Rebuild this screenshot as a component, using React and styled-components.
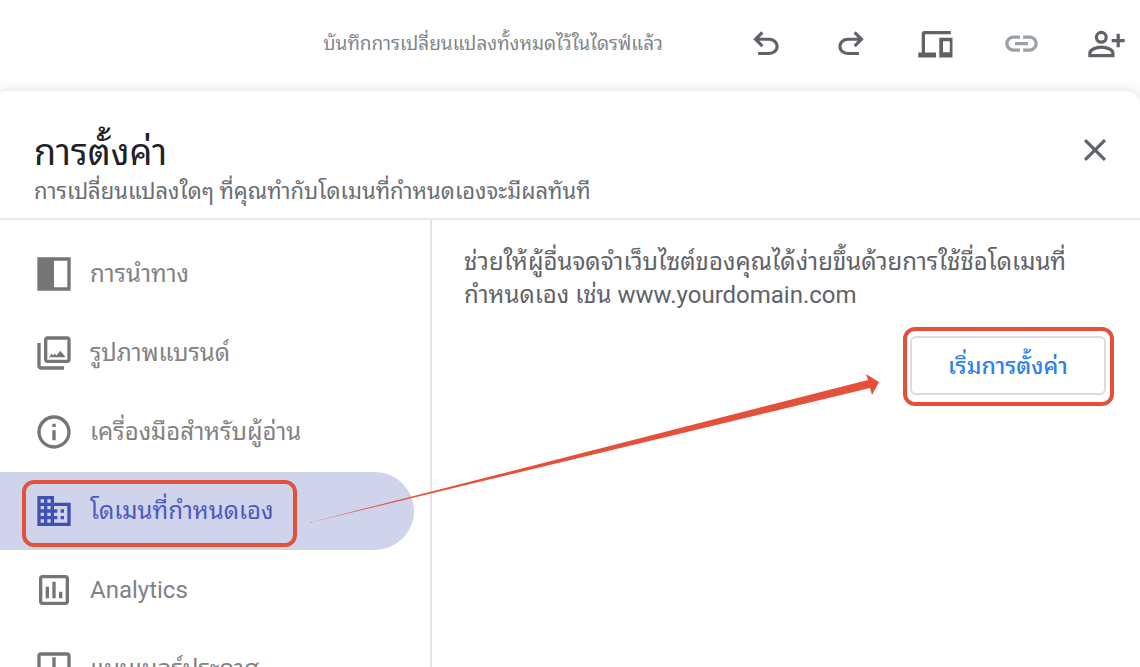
import React from "react";
import styled, { createGlobalStyle } from "styled-components";

const GlobalStyle = createGlobalStyle`
  * {
    box-sizing: border-box;
  }
  body {
    margin: 0;
    background-color: #ffffff;
    font-family: Roboto, "Droid Sans Thai", "Noto Sans Thai Looped", Loma, Waree, Garuda, Umpush, "Noto Sans Thai", "Noto Sans", sans-serif;
  }
  button {
    font-family: inherit;
    border: none;
    background: none;
    padding: 0;
    cursor: pointer;
  }
`;
const Page = styled.div`
  display: flex;
  flex-direction: column;
  height: 100vh;
  overflow: hidden;
`;
const Toolbar = styled.header`
  display: flex;
  flex-shrink: 0;
  align-items: center;
  justify-content: flex-end;
  height: 91px;
  padding: 0 14px 4px 0;
`;
const SaveStatus = styled.span`
  margin-right: 83px;
  font-size: 19px;
  line-height: 32px;
  color: #80868b;
`;
const ToolbarActions = styled.div`
  display: flex;
  gap: 45px;
`;
const IconButton = styled.button`
  display: flex;
  align-items: center;
  justify-content: center;
  width: 40px;
  height: 40px;
  color: ${(props) => (props.disabled ? "#9aa0a6" : "#5f6368")};
`;
const Panel = styled.section`
  display: flex;
  flex: 1;
  flex-direction: column;
  min-height: 0;
  border-radius: 4px 14px 0 0;
  background-color: #ffffff;
  box-shadow: 0 0 12px rgba(60, 64, 67, 0.2);
`;
const PanelHeader = styled.div`
  display: flex;
  flex-shrink: 0;
  align-items: flex-start;
  justify-content: space-between;
  height: 129px;
  padding: 39px 25px 0 34px;
  border-bottom: 2px solid #e8e8e8;
`;
const Title = styled.h1`
  margin: 0;
  font-size: 36px;
  font-weight: 400;
  line-height: 46px;
  color: #202124;
`;
const Subtitle = styled.p`
  margin: 0;
  font-size: 22px;
  line-height: 32px;
  color: #6a6e73;
`;
const PanelBody = styled.div`
  position: relative;
  display: flex;
  flex: 1;
  min-height: 0;
`;
const Sidebar = styled.nav`
  display: flex;
  flex-direction: column;
  flex-shrink: 0;
  gap: 1px;
  width: 432px;
  padding: 15px 16px 0 0;
  border-right: 2px solid #e4e4e4;
`;
const NavItem = styled.button`
  position: relative;
  display: flex;
  flex-shrink: 0;
  align-items: center;
  gap: 16px;
  height: 78px;
  padding-left: 34px;
  border-radius: 0 39px 39px 0;
  font-size: 24px;
  line-height: 32px;
  background-color: ${(props) => (props.$active ? "#d0d3ec" : "transparent")};
  color: ${(props) => (props.$active ? "#4a5bbd" : "#828282")};
  > svg {
    color: ${(props) => (props.$active ? "#3f51b5" : "#757575")};
  }
`;
const Content = styled.main`
  display: flex;
  flex: 1;
  flex-direction: column;
  align-items: flex-start;
  padding: 26px 34px 0 32px;
`;
const Description = styled.p`
  margin: 0;
  font-size: 24px;
  line-height: 33px;
  color: #5f6368;
`;
const SetupButton = styled.button`
  position: relative;
  align-self: flex-end;
  width: 196px;
  height: 59px;
  margin-top: 24px;
  padding-bottom: 4px;
  border: 2px solid #dadce0;
  border-radius: 6px;
  font-size: 23px;
  font-weight: 500;
  color: #2f80ed;
`;
const Highlight = styled.span`
  position: absolute;
  border: 4px solid #e5503a;
  border-radius: 12px;
  pointer-events: none;
`;
const NavHighlight = styled(Highlight)`
  top: 8px;
  left: 22px;
  width: 275px;
  height: 67px;
`;
const ButtonHighlight = styled(Highlight)`
  inset: -11px -10px -13px -9px;
`;
const Arrow = styled.svg`
  position: absolute;
  top: 150px;
  left: 308px;
  pointer-events: none;
`;

const icon = (size, children) => (
  <svg width={size} height={size} viewBox="0 0 24 24" fill="currentColor" aria-hidden="true">
    {children}
  </svg>
);

const UndoIcon = () =>
  icon(
    38,
    <path d="M7 19v-2h7.1q1.575 0 2.738-1T18 13.5 16.838 11 14.1 10H7.8l2.6 2.6L9 14 4 9l5-5 1.4 1.4L7.8 8h6.3q2.425 0 4.163 1.575T20 13.5t-1.737 3.925T14.1 19z" />
  );
const RedoIcon = () =>
  icon(
    38,
    <path
      transform="translate(24 0) scale(-1 1)"
      d="M7 19v-2h7.1q1.575 0 2.738-1T18 13.5 16.838 11 14.1 10H7.8l2.6 2.6L9 14 4 9l5-5 1.4 1.4L7.8 8h6.3q2.425 0 4.163 1.575T20 13.5t-1.737 3.925T14.1 19z"
    />
  );
const DevicesIcon = () => (
  <svg width="40" height="40" viewBox="0 0 40 40" fill="currentColor" aria-hidden="true">
    <path d="M2.3 28.500H5.700V9.500Q5.700 7 8.200 7H34.800V10.200H9V28.500H20V33.500H2.300z" />
    <path fillRule="evenodd" d="M23.300 13.700H36.500V33.500H23.300zM27 17.300V28.200H33.800V17.300z" />
  </svg>
);
const LinkIcon = () =>
  icon(
    39,
    <path d="M17 7h-4v2h4c1.650 0 3 1.350 3 3s-1.350 3-3 3h-4v2h4c2.760 0 5-2.240 5-5s-2.240-5-5-5zm-6 8H7c-1.650 0-3-1.350-3-3s1.350-3 3-3h4V7H7c-2.760 0-5 2.240-5 5s2.240 5 5 5h4v-2zm-3-4h8v2H8z" />
  );
const PersonAddIcon = () => (
  <svg width="40" height="40" viewBox="0 0 40 40" fill="none" stroke="currentColor" strokeWidth="3.2" aria-hidden="true">
    <circle cx="15.3" cy="13.3" r="4.9" />
    <path d="M3.900 31.600v-2.500c0-3.500 6.500-6 11.500-6s11.500 2.500 11.500 6V31.600z" />
    <path d="M25.700 16.600h13M32.200 9.800v13.500" />
  </svg>
);
const CloseIcon = () =>
  icon(
    38,
    <path d="M19 6.410 17.590 5 12 10.590 6.410 5 5 6.410 10.590 12 5 17.590 6.410 19 12 13.410 17.590 19 19 17.590 13.410 12z" />
  );

const NavigationIcon = () => icon(40, <path fillRule="evenodd" d="M2 2h20v20H2zM12 4v16h8V4z" />);
const BrandIcon = () =>
  icon(
    40,
    <path d="M20 4v12H8V4h12m0-2H8c-1.100 0-2 .900-2 2v12c0 1.100.900 2 2 2h12c1.100 0 2-.900 2-2V4c0-1.100-.900-2-2-2zm-8.500 11.500-.800-1.200L9 14.500h10l-3.200-3.800-2.300 2.800-1-1.200zM2 6v14c0 1.100.900 2 2 2h14v-2H4V6H2z" />
  );
const InfoIcon = () =>
  icon(
    40,
    <path d="M11 7h2v2h-2zm0 4h2v6h-2zm1-9C6.480 2 2 6.480 2 12s4.480 10 10 10 10-4.480 10-10S17.520 2 12 2zm0 18c-4.410 0-8-3.590-8-8s3.590-8 8-8 8 3.590 8 8-3.590 8-8 8z" />
  );
const DomainIcon = () =>
  icon(
    40,
    <path d="M12 7V3H2v18h20V7H12zM6 19H4v-2h2v2zm0-4H4v-2h2v2zm0-4H4V9h2v2zm0-4H4V5h2v2zm4 12H8v-2h2v2zm0-4H8v-2h2v2zm0-4H8V9h2v2zm0-4H8V5h2v2zm10 12h-8v-2h2v-2h-2v-2h2v-2h-2V9h8v10zm-2-8h-2v2h2v-2zm0 4h-2v2h2v-2z" />
  );
const AnalyticsIcon = () =>
  icon(
    40,
    <path d="M19 3H5c-1.100 0-2 .900-2 2v14c0 1.100.900 2 2 2h14c1.100 0 2-.900 2-2V5c0-1.100-.900-2-2-2zm0 16H5V5h14v14zM7 10h2v7H7zm4-3h2v10h-2zm4 6h2v4h-2z" />
  );
const BannerIcon = () =>
  icon(
    40,
    <path d="M20 2H4c-1.100 0-2 .900-2 2v18l4-4h14c1.100 0 2-.900 2-2V4c0-1.100-.900-2-2-2zm0 14H5.170L4 17.170V4h16v12zM11 5h2v6h-2zm0 8h2v2h-2z" />
  );

const navItems = [
  { label: "การนำทาง", Icon: NavigationIcon },
  { label: "รูปภาพแบรนด์", Icon: BrandIcon },
  { label: "เครื่องมือสำหรับผู้อ่าน", Icon: InfoIcon },
  { label: "โดเมนที่กำหนดเอง", Icon: DomainIcon, active: true },
  { label: "Analytics", Icon: AnalyticsIcon },
  { label: "แบนเนอร์ประกาศ", Icon: BannerIcon },
];

export default class App extends React.Component {
  render() {
    return (
      <Page>
        <GlobalStyle />
        <Toolbar>
          <SaveStatus>บันทึกการเปลี่ยนแปลงทั้งหมดไว้ในไดรฟ์แล้ว</SaveStatus>
          <ToolbarActions>
            <IconButton aria-label="เลิกทำ">
              <UndoIcon />
            </IconButton>
            <IconButton aria-label="ทำซ้ำ">
              <RedoIcon />
            </IconButton>
            <IconButton aria-label="ดูตัวอย่าง">
              <DevicesIcon />
            </IconButton>
            <IconButton aria-label="คัดลอกลิงก์" disabled>
              <LinkIcon />
            </IconButton>
            <IconButton aria-label="แชร์">
              <PersonAddIcon />
            </IconButton>
          </ToolbarActions>
        </Toolbar>
        <Panel>
          <PanelHeader>
            <div>
              <Title>การตั้งค่า</Title>
              <Subtitle>การเปลี่ยนแปลงใดๆ ที่คุณทำกับโดเมนที่กำหนดเองจะมีผลทันที</Subtitle>
            </div>
            <IconButton aria-label="ปิด">
              <CloseIcon />
            </IconButton>
          </PanelHeader>
          <PanelBody>
            <Sidebar>
              {navItems.map(({ label, Icon, active }) => (
                <NavItem key={label} $active={active}>
                  <Icon />
                  {label}
                  {active && <NavHighlight />}
                </NavItem>
              ))}
            </Sidebar>
            <Content>
              <Description>
                ช่วยให้ผู้อื่นจดจำเว็บไซต์ของคุณได้ง่ายขึ้นด้วยการใช้ชื่อโดเมนที่
                <br />
                กำหนดเอง เช่น www.yourdomain.com
              </Description>
              <SetupButton>
                เริ่มการตั้งค่า
                <ButtonHighlight />
              </SetupButton>
            </Content>
            <Arrow width="572" height="160" viewBox="0 0 572 160" aria-hidden="true">
              <path fill="#e5503a" d="M0 153 560 10 558 4 571 12 564 25 562 18z" />
            </Arrow>
          </PanelBody>
        </Panel>
      </Page>
    );
  }
}
